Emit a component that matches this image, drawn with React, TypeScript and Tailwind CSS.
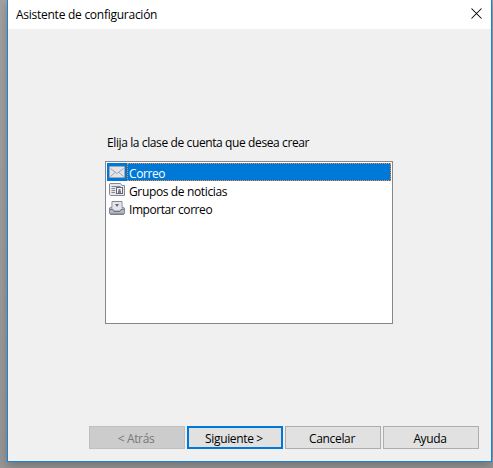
import React from "react";

function MailIcon() {
  return (
    <svg width="16" height="16" viewBox="0 0 16 16" fill="none">
      <rect x="0.5" y="2.5" width="15" height="11" rx="0.4" fill="#e4e5ea" stroke="#a3a7b3" />
      <path d="M1.5 4.5 8 9.5l6.5-5M1.5 12.5 6 8.5M14.5 12.5 10 8.5" stroke="#989ba7" strokeWidth="0.9" />
    </svg>
  );
}

function NewsIcon() {
  return (
    <svg width="16" height="16" viewBox="0 0 16 16" fill="none">
      <path d="M1 1.5h10.5l1.5 2h2.5v10H1.5l-1-1V2z" fill="#e6e7ec" stroke="#858896" />
      <path d="M2.5 4.5h9M2.5 6.5H6M2.5 8.5H6M2.5 10.5H6" stroke="#858896" />
      <rect x="7.5" y="5.5" width="6" height="6" fill="#f5f5f8" stroke="#656879" />
      <path d="M9.5 7h2v2h-2zM9 9h3v2H9z" fill="#777a89" />
    </svg>
  );
}

function ImportIcon() {
  return (
    <svg width="16" height="16" viewBox="0 0 16 16" fill="none">
      <path d="M3 1.5h10V7l2.5 1v5.5l-1 1h-13l-1-1V8L3 7z" fill="#b6b8c3" stroke="#858896" />
      <path d="M3.5 2h9v8h-9z" fill="#e4e5ea" />
      <path d="M6 4h4L8 7z" fill="#686b7b" />
      <path d="M1 9.5h3l1 2h6l1-2h3V14H1z" fill="#b5b7c2" />
      <path d="M1 9.5h3l1 2h6l1-2h3" stroke="#727584" />
      <path d="M1 14h14" stroke="#727584" />
    </svg>
  );
}

const accounts = [
  { label: "Correo", Icon: MailIcon, tracking: "tracking-[-0.4px]" },
  { label: "Grupos de noticias", Icon: NewsIcon, tracking: "tracking-[-0.36px]" },
  { label: "Importar correo", Icon: ImportIcon, tracking: "tracking-[-0.43px]" },
];

const buttonBase = "flex h-[23px] w-24 items-center justify-center border pt-0.5 pr-0.5 leading-none tracking-[-0.35px]";

export default function App() {
  return (
    <div className="h-[468px] w-[493px] overflow-hidden bg-[linear-gradient(to_bottom,#a2a2a2,#979797)] pl-[7px] font-['Open_Sans','Noto_Sans',sans-serif] text-[12px] text-black">
      <main className="flex h-[462px] w-[485px] flex-col border-x border-b border-[#1883d7] bg-[#f0f0f0] shadow-[0_4px_10px_rgba(0,0,0,0.25)]">
        <header className="flex h-[29px] shrink-0 items-center justify-between bg-white pr-[9px] pl-2">
          <h1 className="whitespace-nowrap tracking-[-0.26px]">Asistente de configuración</h1>
          <button aria-label="Cerrar" className="pb-[3px]">
            <svg width="11" height="11" viewBox="0 0 11 11" stroke="#000" strokeWidth="1.05">
              <path d="m.5.5 10 10m0-10-10 10" />
            </svg>
          </button>
        </header>
        <section className="ml-[97px] flex w-72 flex-1 flex-col pt-[105px]">
          <p className="ml-0.5 h-[27px] leading-[18px] whitespace-nowrap tracking-[-0.39px]">Elija la clase de cuenta que desea crear</p>
          <ul className="h-[163px] border border-[#828790] bg-white p-px">
            {accounts.map(({ label, Icon, tracking }, i) => (
              <li key={label} className={`flex h-[18px] items-center pl-0.5 ${i === 0 ? "bg-[#0078d7] text-white" : ""}`}>
                <Icon />
                <span className={`ml-0.5 flex h-[18px] flex-1 items-center border border-dotted pt-[3px] pl-px whitespace-nowrap ${tracking} ${i === 0 ? "border-[#ff8728]" : "border-transparent"}`}>{label}</span>
              </li>
            ))}
          </ul>
        </section>
        <footer className="flex h-[35px] shrink-0 gap-0.5 pl-[81px]">
          <button disabled className={`${buttonBase} border-[#bfbfbf] bg-[#cccccc] text-[#777777]`}>&lt; Atrás</button>
          <button className={`${buttonBase} border-2 border-[#0078d7] bg-[#e1e1e1]`}>Siguiente &gt;</button>
          <button className={`${buttonBase} border-[#adadad] bg-[#e1e1e1]`}>Cancelar</button>
          <button className={`${buttonBase} border-[#adadad] bg-[#e1e1e1]`}>Ayuda</button>
        </footer>
      </main>
    </div>
  );
}
